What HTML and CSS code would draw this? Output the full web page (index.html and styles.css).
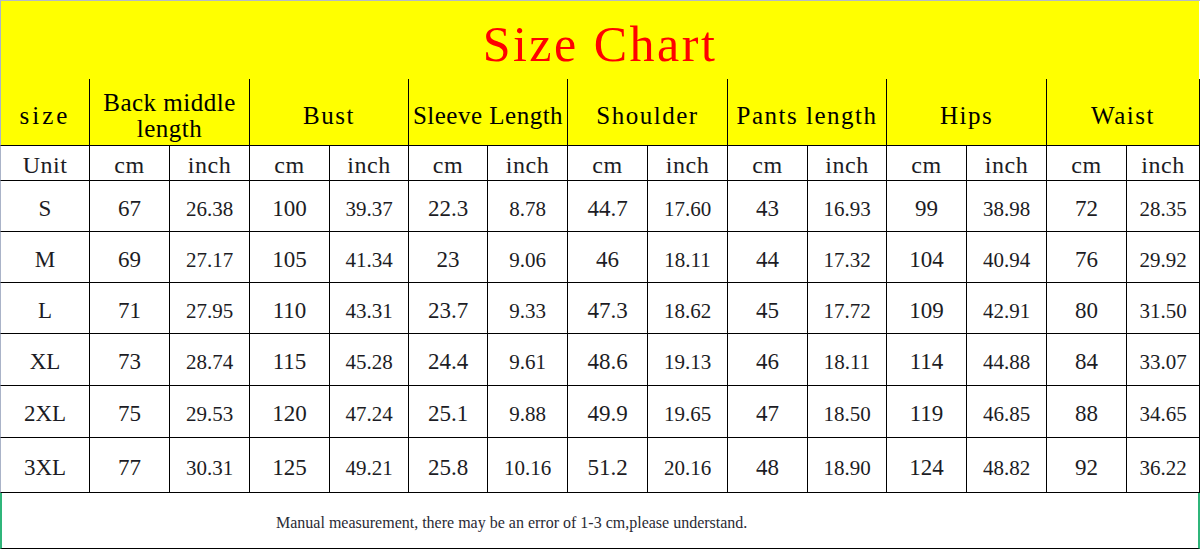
FILE: index.html
```html
<!DOCTYPE html>
<html>
<head>
<meta charset="utf-8">
<link rel="stylesheet" href="styles.css">
</head>
<body>
<div class="sheet">
  <div class="cell title">Size Chart</div>

  <div class="cell head first wide">size</div>
  <div class="cell head span2 two tight">Back middle<br>length</div>
  <div class="cell head span2">Bust</div>
  <div class="cell head span2 tight">Sleeve Length</div>
  <div class="cell head span2">Shoulder</div>
  <div class="cell head span2">Pants length</div>
  <div class="cell head span2">Hips</div>
  <div class="cell head span2">Waist</div>

  <div class="cell unit first">Unit</div>
  <div class="cell unit">cm</div><div class="cell unit">inch</div>
  <div class="cell unit">cm</div><div class="cell unit">inch</div>
  <div class="cell unit">cm</div><div class="cell unit">inch</div>
  <div class="cell unit">cm</div><div class="cell unit">inch</div>
  <div class="cell unit">cm</div><div class="cell unit">inch</div>
  <div class="cell unit">cm</div><div class="cell unit">inch</div>
  <div class="cell unit">cm</div><div class="cell unit">inch</div>

  <div class="cell val first">S</div>
  <div class="cell val">67</div><div class="cell inch">26.38</div>
  <div class="cell val">100</div><div class="cell inch">39.37</div>
  <div class="cell val">22.3</div><div class="cell inch">8.78</div>
  <div class="cell val">44.7</div><div class="cell inch">17.60</div>
  <div class="cell val">43</div><div class="cell inch">16.93</div>
  <div class="cell val">99</div><div class="cell inch">38.98</div>
  <div class="cell val">72</div><div class="cell inch">28.35</div>

  <div class="cell val first">M</div>
  <div class="cell val">69</div><div class="cell inch">27.17</div>
  <div class="cell val">105</div><div class="cell inch">41.34</div>
  <div class="cell val">23</div><div class="cell inch">9.06</div>
  <div class="cell val">46</div><div class="cell inch">18.11</div>
  <div class="cell val">44</div><div class="cell inch">17.32</div>
  <div class="cell val">104</div><div class="cell inch">40.94</div>
  <div class="cell val">76</div><div class="cell inch">29.92</div>

  <div class="cell val first">L</div>
  <div class="cell val">71</div><div class="cell inch">27.95</div>
  <div class="cell val">110</div><div class="cell inch">43.31</div>
  <div class="cell val">23.7</div><div class="cell inch">9.33</div>
  <div class="cell val">47.3</div><div class="cell inch">18.62</div>
  <div class="cell val">45</div><div class="cell inch">17.72</div>
  <div class="cell val">109</div><div class="cell inch">42.91</div>
  <div class="cell val">80</div><div class="cell inch">31.50</div>

  <div class="cell val first">XL</div>
  <div class="cell val">73</div><div class="cell inch">28.74</div>
  <div class="cell val">115</div><div class="cell inch">45.28</div>
  <div class="cell val">24.4</div><div class="cell inch">9.61</div>
  <div class="cell val">48.6</div><div class="cell inch">19.13</div>
  <div class="cell val">46</div><div class="cell inch">18.11</div>
  <div class="cell val">114</div><div class="cell inch">44.88</div>
  <div class="cell val">84</div><div class="cell inch">33.07</div>

  <div class="cell val first">2XL</div>
  <div class="cell val">75</div><div class="cell inch">29.53</div>
  <div class="cell val">120</div><div class="cell inch">47.24</div>
  <div class="cell val">25.1</div><div class="cell inch">9.88</div>
  <div class="cell val">49.9</div><div class="cell inch">19.65</div>
  <div class="cell val">47</div><div class="cell inch">18.50</div>
  <div class="cell val">119</div><div class="cell inch">46.85</div>
  <div class="cell val">88</div><div class="cell inch">34.65</div>

  <div class="cell val first">3XL</div>
  <div class="cell val">77</div><div class="cell inch">30.31</div>
  <div class="cell val">125</div><div class="cell inch">49.21</div>
  <div class="cell val">25.8</div><div class="cell inch">10.16</div>
  <div class="cell val">51.2</div><div class="cell inch">20.16</div>
  <div class="cell val">48</div><div class="cell inch">18.90</div>
  <div class="cell val">124</div><div class="cell inch">48.82</div>
  <div class="cell val">92</div><div class="cell inch">36.22</div>

  <div class="cell note">Manual measurement, there may be an error of 1-3 cm,please understand.</div>
</div>
</body>
</html>
```

FILE: styles.css
```css
html, body {
  margin: 0;
  padding: 0;
  background: #ffffff;
}

.sheet {
  display: grid;
  width: 1200px;
  grid-template-columns: 90px 80px 80px 80px 79px 79px 80px 80px 80px 80px 79px 80px 80px 80px 73px;
  grid-template-rows: 78px 67px 35px 51px 51px 51px 52px 52px 55px 56px;
  border-top: 1px solid #b6bac4;
  font-family: "Liberation Serif", "Times New Roman", serif;
  color: #1c1c24;
}

.cell {
  box-sizing: border-box;
  display: flex;
  align-items: center;
  justify-content: center;
  text-align: center;
  border-right: 1px solid #000;
  border-bottom: 1px solid #000;
  white-space: nowrap;
}

.first {
  border-left: 1px solid #aab3c8;
}

.title {
  grid-column: 1 / -1;
  background: #ffff00;
  color: #ff0000;
  border-left: 1px solid #aab3c8;
  border-right: 1px solid #ffffff;
  border-bottom: none;
  align-items: flex-start;
  padding-top: 18px;
  font-size: 50px;
  line-height: 50px;
  letter-spacing: 2.5px;
}

.head {
  background: #ffff00;
  color: #000;
  font-size: 25px;
  line-height: 26px;
  padding-top: 7px;
  letter-spacing: 1.5px;
}

.span2 {
  grid-column: span 2;
}

.wide {
  letter-spacing: 3px;
}

.tight {
  letter-spacing: 0.5px;
}

.unit {
  font-size: 24px;
  line-height: 24px;
  padding-top: 3px;
  letter-spacing: 0.5px;
}

.val {
  font-size: 23px;
  line-height: 24px;
  padding-top: 5px;
}

.inch {
  font-size: 21px;
  line-height: 22px;
  padding-top: 5px;
}

.note {
  grid-column: 1 / -1;
  justify-content: flex-start;
  border-left: 2px solid #2fb57a;
  border-right: 2px solid #2fb57a;
  padding-left: 274px;
  padding-top: 5px;
  font-size: 16px;
  line-height: 18px;
  color: #2a2a34;
}
```
